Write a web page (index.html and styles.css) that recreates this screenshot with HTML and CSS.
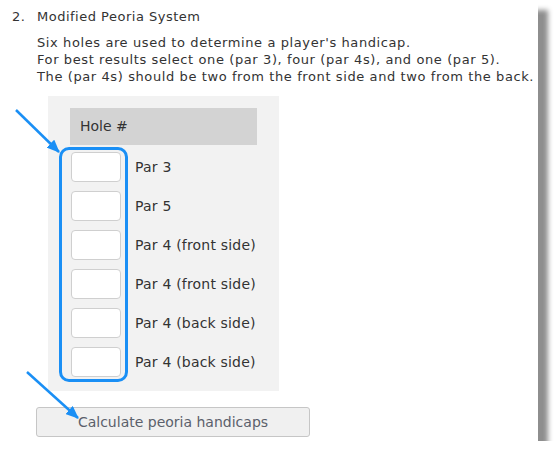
FILE: index.html
```html
<!DOCTYPE html>
<html lang="en">
<head>
    <meta charset="UTF-8">
    <meta name="viewport" content="width=device-width, initial-scale=1.0">
    <title>Peoria Handicap</title>
    <link rel="stylesheet" href="styles.css">
</head>
<body>
    <div class="panel">
        <div class="step-title">
            <span class="step-num">2.</span>
            <span>Modified Peoria System</span>
        </div>
        <p class="step-text">
            Six holes are used to determine a player's handicap.<br>
            For best results select one (par 3), four (par 4s), and one (par 5).<br>
            The (par 4s) should be two from the front side and two from the back.
        </p>

        <div class="hole-box">
            <div class="hole-header">Hole #</div>
            <div class="hole-rows">
                <div class="highlight"></div>
                <div class="hole-row"><input type="text" class="hole-input"><span>Par 3</span></div>
                <div class="hole-row"><input type="text" class="hole-input"><span>Par 5</span></div>
                <div class="hole-row"><input type="text" class="hole-input"><span>Par 4 (front side)</span></div>
                <div class="hole-row"><input type="text" class="hole-input"><span>Par 4 (front side)</span></div>
                <div class="hole-row"><input type="text" class="hole-input"><span>Par 4 (back side)</span></div>
                <div class="hole-row"><input type="text" class="hole-input"><span>Par 4 (back side)</span></div>
            </div>
        </div>

        <button class="calc-button">Calculate peoria handicaps</button>

        <!-- annotation arrows -->
        <svg class="arrows" width="559" height="461" viewBox="0 0 559 461">
            <defs>
                <marker id="head" markerUnits="userSpaceOnUse" markerWidth="13" markerHeight="11" refX="12" refY="5.5" orient="auto">
                    <path d="M0,0 L13,5.5 L0,11 z" fill="#1a8ff5"/>
                </marker>
            </defs>
            <line x1="16" y1="110" x2="59" y2="152" stroke="#1a8ff5" stroke-width="2.5" marker-end="url(#head)"/>
            <line x1="27" y1="372" x2="78" y2="418" stroke="#1a8ff5" stroke-width="2.5" marker-end="url(#head)"/>
        </svg>
    </div>
</body>
</html>
```

FILE: styles.css
```css
body {
    margin: 0;
    padding: 0;
    background-color: #ffffff;
    font-family: "DejaVu Sans", Verdana, sans-serif;
    font-size: 13px;
    color: #333333;
}

.panel {
    position: relative;
    width: 538px;
    height: 441px;
    box-sizing: border-box;
    padding: 8px 0 0 0;
    background-color: #ffffff;
    box-shadow: 10px 10px 5px #8e8e8e;
}

.step-title {
    display: flex;
    line-height: 17px;
    padding-left: 12px;
    letter-spacing: 0.5px;
}

.step-num {
    width: 25px;
}

.step-text {
    margin: 9px 0 0 0;
    padding-left: 37px;
    line-height: 17px;
    letter-spacing: 0.6px;
}

.hole-box {
    margin: 11px 0 0 48px;
    width: 231px;
    height: 295px;
    box-sizing: border-box;
    padding: 12px 22px 14px 22px;
    background-color: #f2f2f2;
}

.hole-header {
    height: 37px;
    line-height: 37px;
    padding-left: 10px;
    background-color: #d3d3d3;
    font-size: 14px;
}

.hole-rows {
    position: relative;
    display: flex;
    flex-direction: column;
    gap: 9px;
    margin-top: 7px;
    padding-left: 1px;
}

.hole-row {
    display: flex;
    align-items: center;
    gap: 14px;
    font-size: 14px;
    letter-spacing: 0.2px;
}

.hole-input {
    width: 50px;
    height: 30px;
    box-sizing: border-box;
    margin: 0;
    border: 1px solid #cfcfcf;
    border-radius: 4px;
    background-color: #ffffff;
}

.highlight {
    position: absolute;
    left: -11px;
    top: -5px;
    width: 69px;
    height: 235px;
    box-sizing: border-box;
    border: 3px solid #1a8ff5;
    border-radius: 10px;
}

.calc-button {
    display: block;
    margin: 16px 0 0 36px;
    width: 274px;
    height: 30px;
    background-color: #f0f0f0;
    border: 1px solid #c6c6c6;
    border-radius: 3px;
    font-family: "DejaVu Sans", Verdana, sans-serif;
    font-size: 14px;
    color: #5b606b;
}

.arrows {
    position: absolute;
    left: 0;
    top: 0;
    pointer-events: none;
}
```
